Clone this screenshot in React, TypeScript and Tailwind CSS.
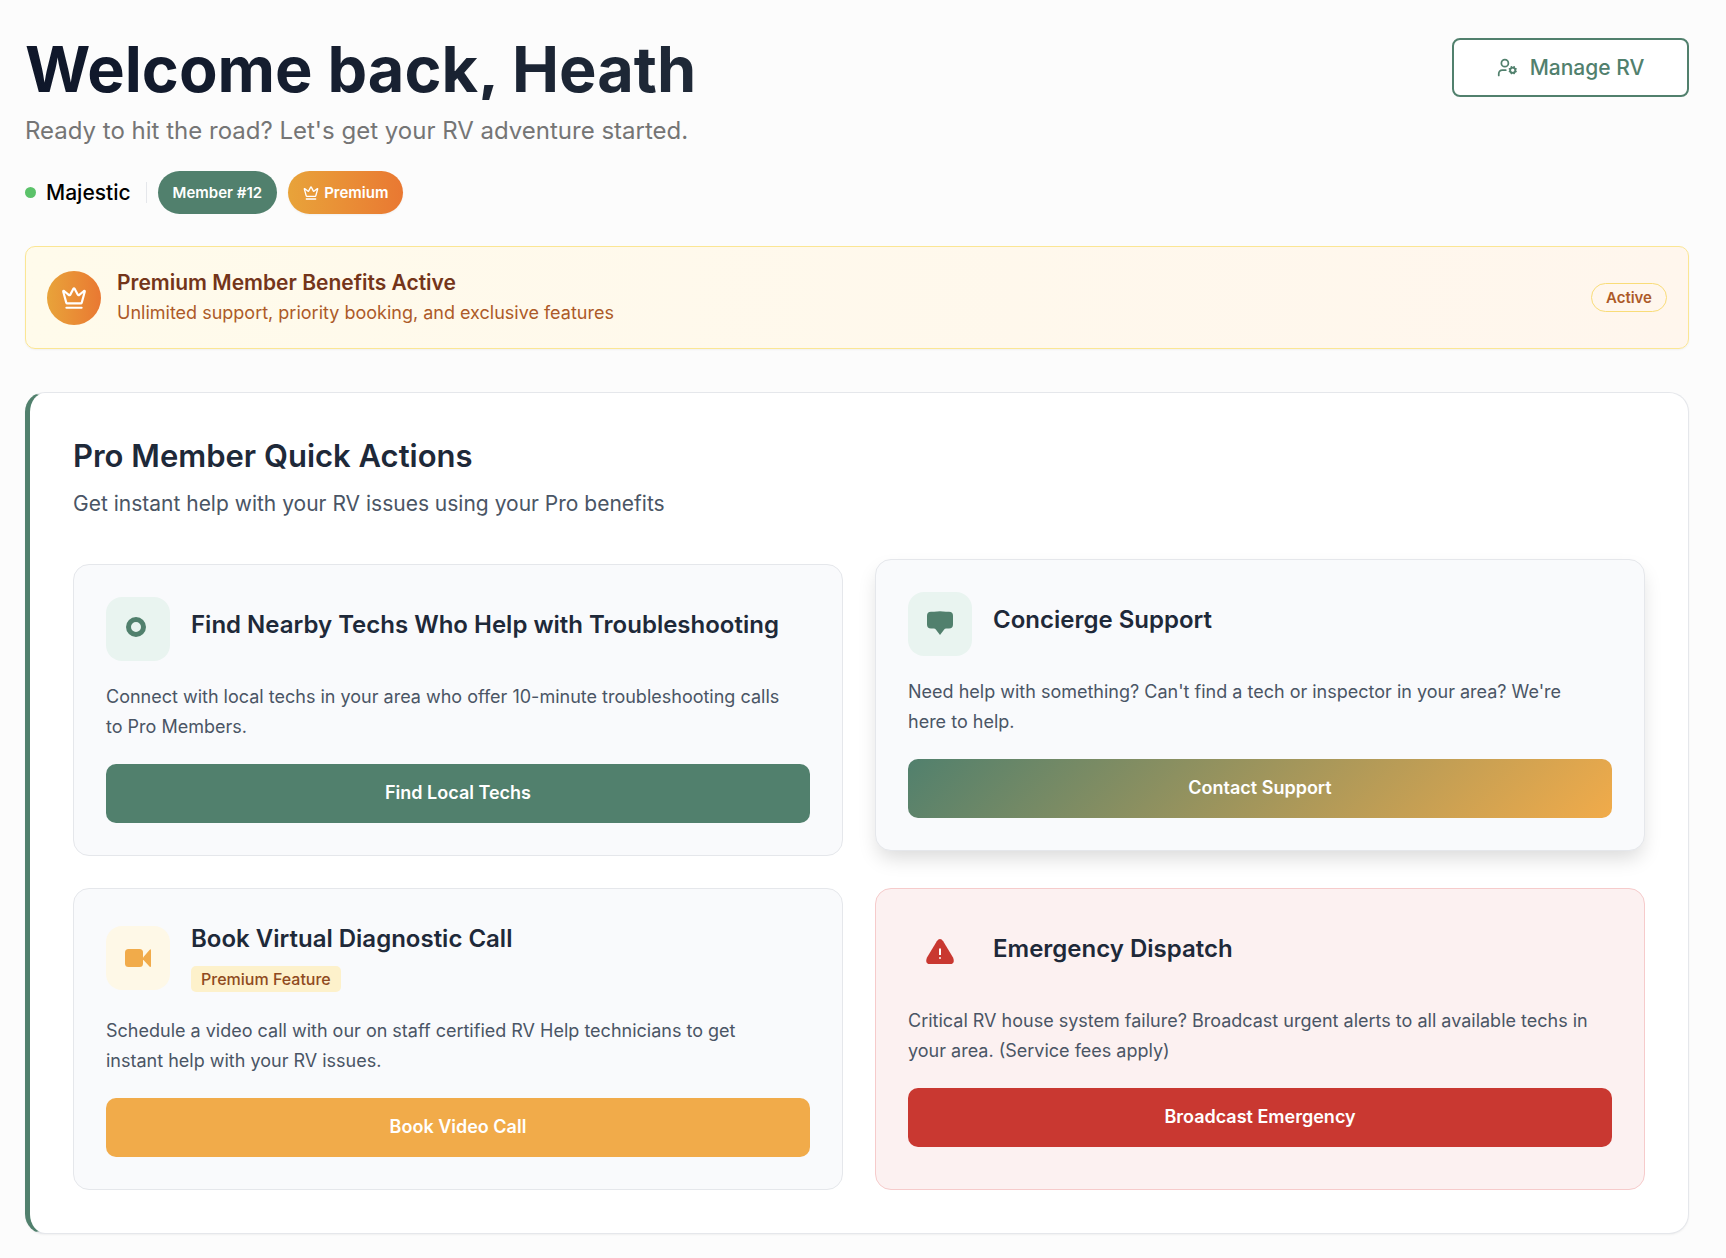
import { Crown, UserCog } from "lucide-react";
import type { ReactNode } from "react";

interface ActionCardProps {
  icon: ReactNode;
  tile: string;
  title: string;
  badge?: string;
  text: string;
  action: string;
  button: string;
  card?: string;
}

function ActionCard({ icon, tile, title, badge, text, action, button, card = "border-gray-200 bg-[#f9fafc]" }: ActionCardProps) {
  return (
    <article className={`rounded-2xl border p-8 ${card}`}>
      <div className="flex items-center gap-[21px]">
        <div className={`flex size-16 shrink-0 items-center justify-center rounded-2xl ${tile}`}>{icon}</div>
        <div>
          <h3 className="mb-[9px] text-[24px] leading-9 font-semibold text-gray-800">{title}</h3>
          {badge && (
            <span className="mb-[3px] block w-fit rounded-[5px] bg-[#fdf1cb] px-[10px] text-[16px] leading-[26px] font-medium text-[#8f4a20]">
              {badge}
            </span>
          )}
        </div>
      </div>
      <p className="mt-[21px] pr-4 text-[18px] leading-[30px] text-gray-600">{text}</p>
      <button type="button" className={`mt-[22px] h-[59px] w-full rounded-[10px] pb-[2px] text-[18px] font-semibold text-white ${button}`}>
        {action}
      </button>
    </article>
  );
}

function PinIcon() {
  return (
    <svg className="size-8 text-[#51806d]" viewBox="0 0 32 32" fill="none" stroke="currentColor">
      <circle cx="14" cy="14" r="7.5" strokeWidth="5" />
    </svg>
  );
}

function ChatIcon() {
  return (
    <svg className="size-8 text-[#51806d]" viewBox="0 0 32 32" fill="currentColor">
      <path d="M7 3.800H10Q16 2.600 22 3.800H25Q29 3.800 29 7.800V16.500q0 4-4 4h-2.800q-1.400 0-2.200 1.200L16 27l-4-5.300q-.8-1.200-2.200-1.200H7q-4 0-4-4V7.800Q3 3.800 7 3.800Z" />
    </svg>
  );
}

function VideoIcon() {
  return (
    <svg className="size-8 text-[#f1ab4a]" viewBox="0 0 32 32" fill="currentColor">
      <rect x="3" y="7" width="18" height="18" rx="3.500" />
      <path d="M21 15.500 27.500 8Q29 6.500 29 8.500v15Q29 26 27.500 24.500L21 17.500Z" />
    </svg>
  );
}

function AlertIcon() {
  return (
    <svg className="size-8" viewBox="0 0 32 32">
      <path fill="#c93831" d="M12.800 4.200Q16-.2 19.200 4.200L29 20.500Q31.500 27 26 27H6Q.5 27 3 20.500Z" />
      <path stroke="#fff" strokeWidth="2" d="M16 11.500v6.500" />
      <path stroke="#fff" strokeOpacity=".7" strokeWidth="2" d="M16 20v2" />
    </svg>
  );
}

export default function App() {
  return (
    <div className="min-h-screen bg-[#fcfcfc] pt-[38px] pr-[37px] pb-6 pl-[25px] font-['Inter',sans-serif]">
      <header className="flex items-start justify-between">
        <div>
          <h1 className="w-fit bg-linear-to-r from-[#0f172a] to-[#1f2937] bg-clip-text text-[63px] leading-[62px] font-bold text-transparent">
            Welcome back, Heath
          </h1>
          <p className="mt-[13px] text-[24px] leading-9 text-[#757575]">Ready to hit the road? Let's get your RV adventure started.</p>
          <div className="mt-[22px] flex items-center">
            <span className="size-[11px] rounded-full bg-[#5bc26a]" />
            <span className="ml-[10px] text-[21px] font-medium text-black">Majestic</span>
            <span className="mr-[11px] ml-[15px] h-[21px] w-px bg-gray-200" />
            <span className="rounded-full bg-[#51806d] px-[15px] text-[15px] leading-[43px] font-semibold text-white">Member #12</span>
            <span className="ml-[11px] flex items-center gap-[5px] rounded-full bg-linear-to-r from-[#e8a33a] to-[#e97832] px-[15px] text-[15px] leading-[43px] font-semibold text-white shadow-xs">
              <Crown className="size-4" />
              Premium
            </span>
          </div>
        </div>
        <button
          type="button"
          className="flex h-[59px] w-[237px] items-center justify-center gap-3 rounded-lg border-2 border-[#51806d] bg-white text-[21px] font-medium text-[#51806d]"
        >
          <UserCog className="size-[21px]" />
          Manage RV
        </button>
      </header>

      <section className="mt-8 flex h-[103px] items-center rounded-[10px] border border-[#fbe694] bg-linear-to-r from-[#fffbeb] to-[#fff6ed] px-[21px] shadow-xs">
        <div className="flex size-[54px] items-center justify-center rounded-full bg-linear-to-r from-[#e8a33a] to-[#e97832] text-white">
          <Crown className="size-[26px]" />
        </div>
        <div className="ml-4">
          <h2 className="text-[21px] leading-[30px] font-semibold text-[#74351a]">Premium Member Benefits Active</h2>
          <p className="text-[18px] leading-[30px] text-[#ad5a28]">Unlimited support, priority booking, and exclusive features</p>
        </div>
        <span className="ml-auto rounded-full border border-[#f9dc78] px-[14px] text-[15px] leading-[27px] font-semibold text-[#ad5a28]">Active</span>
      </section>

      <main className="mt-[43px] rounded-[20px] border border-l-[5px] border-gray-200 border-l-[#51806d] bg-white p-[43px] shadow-xs">
        <h2 className="text-[31px] leading-10 font-semibold text-gray-800">Pro Member Quick Actions</h2>
        <p className="mt-[11px] text-[21px] leading-[34px] text-gray-600">Get instant help with your RV issues using your Pro benefits</p>
        <div className="mt-[43px] grid grid-cols-2 gap-8">
          <ActionCard
            icon={<PinIcon />}
            tile="bg-[#e9f4f0]"
            title="Find Nearby Techs Who Help with Troubleshooting"
            text="Connect with local techs in your area who offer 10-minute troubleshooting calls to Pro Members."
            action="Find Local Techs"
            button="bg-[#51806d]"
          />
          <ActionCard
            icon={<ChatIcon />}
            tile="bg-[#e9f4f0]"
            title="Concierge Support"
            text="Need help with something? Can't find a tech or inspector in your area? We're here to help."
            action="Contact Support"
            button="bg-linear-[135deg] from-[#51806d] to-[#f1ab4a]"
            card="-translate-y-[5px] border-gray-200 bg-[#f9fafc] shadow-[0_10px_20px_-3px_rgba(0,0,0,0.15)]"
          />
          <ActionCard
            icon={<VideoIcon />}
            tile="bg-[#fef8e7]"
            title="Book Virtual Diagnostic Call"
            badge="Premium Feature"
            text="Schedule a video call with our on staff certified RV Help technicians to get instant help with your RV issues."
            action="Book Video Call"
            button="bg-[#f1ab4a]"
          />
          <ActionCard
            icon={<AlertIcon />}
            tile=""
            title="Emergency Dispatch"
            text="Critical RV house system failure? Broadcast urgent alerts to all available techs in your area. (Service fees apply)"
            action="Broadcast Emergency"
            button="bg-[#c93831]"
            card="border-[#f6cbcb] bg-[#fcf1f1]"
          />
        </div>
      </main>
    </div>
  );
}
